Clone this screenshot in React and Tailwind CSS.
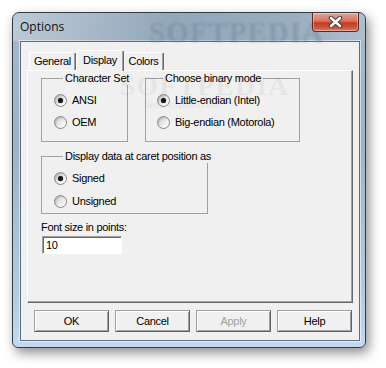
import React from 'react';

function Radio({ checked, label }) {
  return (
    <div className="flex items-center h-[18px]">
      <span className="relative w-[13px] h-[13px] rounded-full border border-[#8a8a8a] bg-[linear-gradient(135deg,#c9c9c9,#f4f4f4_70%,#ffffff)] shadow-[inset_1px_1px_1px_rgba(0,0,0,0.15)] flex items-center justify-center">
        {checked && <span className="w-[5px] h-[5px] rounded-full bg-[#151515] shadow-[0_0_1px_#555]" />}
      </span>
      <span className="ml-[5px] whitespace-nowrap">{label}</span>
    </div>
  );
}

function Group({ title, className, legendClass, children }) {
  return (
    <fieldset className={`min-w-0 border border-[#a0a0a0] ${className}`}>
      <legend className={`px-[2px] leading-[13px] whitespace-nowrap ${legendClass}`}>{title}</legend>
      {children}
    </fieldset>
  );
}

function Button({ children, disabled }) {
  return (
    <button
      className={`w-[75px] h-[22px] bg-[#f0f0f0] border border-[#a0a0a0] border-b-[#5f5f5f] border-r-[#5f5f5f] shadow-[inset_1px_1px_0_#ffffff,inset_-1px_-1px_0_#a0a0a0] ${disabled ? 'text-[#a0a0a0]' : 'text-black'}`}
    >
      {children}
    </button>
  );
}

export default function App() {
  return (
    <div className="w-[386px] h-[368px] bg-white pt-[12px] pl-[12px] font-['Liberation_Sans',Arial,sans-serif] text-[11px] tracking-[-0.3px] text-black">
      {/* Window */}
      <div className="relative w-[354px] h-[336px] rounded-t-[7px] rounded-b-[6px] border border-[#333b44] bg-[linear-gradient(180deg,#a6b8c9_0%,#9fb3c6_40%,#b4cbe1_85%,#c4d9ee_100%)] shadow-[3px_5px_12px_rgba(0,0,0,0.45)] overflow-hidden">
        {/* Title bar */}
        <div className="relative h-[28px] flex items-start justify-between pl-[7px] pr-[6px] bg-[linear-gradient(90deg,rgba(255,255,255,0.25),rgba(90,115,140,0.25)_45%,rgba(90,115,140,0.15)_80%,rgba(255,255,255,0.1))]">
          <span className="mt-[6px] font-['Open_Sans',sans-serif] text-[12px] tracking-normal leading-[16px] text-[#111]">Options</span>
          <span aria-hidden="true" className="pointer-events-none absolute left-[136px] top-[-2px] font-['Liberation_Serif',serif] font-bold text-[29px] tracking-[1px] text-[#6d889f] opacity-45 blur-[1px]">SOFTPEDIA</span>
          <div className="relative z-10 w-[47px] h-[19px] rounded-b-[4px] border border-t-0 border-[#5a2a22] bg-[linear-gradient(180deg,#e7a597_0%,#d6735f_45%,#c13b23_55%,#cf5a3f_85%,#e0846a_100%)] shadow-[inset_0_0_0_1px_rgba(255,255,255,0.35)] flex items-center justify-center">
            <svg width="15" height="12" viewBox="0 0 15 12">
              <path d="M3 2 L12 10 M12 2 L3 10" stroke="#3d3d3d" strokeWidth="4.5" strokeLinecap="round" />
              <path d="M3 2 L12 10 M12 2 L3 10" stroke="#ffffff" strokeWidth="2.6" strokeLinecap="round" />
            </svg>
          </div>
        </div>

        {/* Client area */}
        <div className="ml-[7px] w-[340px] h-[300px] border border-[#5b6d7e] bg-[#f0f0f0] shadow-[0_0_0_1px_rgba(255,255,255,0.55)]">
          {/* Tabs */}
          <div className="flex items-end h-[28px] pl-[8px] pt-[8px]">
            <div className="w-[47px] h-[18px] flex items-center justify-center rounded-t-[2px] border-l border-t border-white border-r border-r-[#696969] shadow-[inset_-1px_0_0_#a0a0a0]">
              General
            </div>
            <div className="relative z-10 w-[48px] h-[21px] -mb-[1px] pb-[2px] flex items-center justify-center rounded-t-[2px] bg-[#f0f0f0] border-l border-t border-white border-r border-r-[#696969] shadow-[inset_-1px_0_0_#a0a0a0]">
              Display
            </div>
            <div className="w-[40px] h-[18px] flex items-center justify-center rounded-t-[2px] border-t border-white border-r border-r-[#696969] shadow-[inset_-1px_0_0_#a0a0a0]">
              Colors
            </div>
          </div>

          {/* Tab panel */}
          <div className="relative ml-[6px] w-[326px] h-[233px] border border-t-white border-l-white border-r-[#696969] border-b-[#696969] shadow-[inset_-1px_-1px_0_#a0a0a0] pl-[13px] pt-[1px]">
            <div aria-hidden="true" className="pointer-events-none absolute left-[92px] top-[-6px] font-['Liberation_Serif',serif] font-bold text-[28px] tracking-[1px] text-black opacity-[0.04]">SOFTPEDIA</div>
            <div aria-hidden="true" className="pointer-events-none absolute left-[118px] top-[28px] text-[9px] text-black opacity-[0.06]">www.softpedia.com</div>

            <div className="flex gap-[17px]">
              <Group title="Character Set" className="w-[87px] pl-[12px] pt-[6px] pb-[10px]" legendClass="ml-[9px]">
                <div className="flex flex-col gap-[4px]">
                  <Radio checked label="ANSI" />
                  <Radio label="OEM" />
                </div>
              </Group>
              <Group title="Choose binary mode" className="w-[155px] pl-[11px] pt-[6px] pb-[10px]" legendClass="ml-[6px]">
                <div className="flex flex-col gap-[4px]">
                  <Radio checked label="Little-endian (Intel)" />
                  <Radio label="Big-endian (Motorola)" />
                </div>
              </Group>
            </div>

            <Group title="Display data at caret position as" className="mt-[8px] w-[167px] pl-[12px] pt-[6px] pb-[3px]" legendClass="ml-[9px]">
              <div className="flex flex-col gap-[5px]">
                <Radio checked label="Signed" />
                <Radio label="Unsigned" />
              </div>
            </Group>

            <div className="mt-[7px] leading-[13px]">Font size in points:</div>
            <div className="mt-[2px] ml-[1px] w-[80px] h-[18px] bg-white border border-[#a0a0a0] border-r-white border-b-white shadow-[inset_1px_1px_0_#696969] flex items-center pl-[3px]">
              10
            </div>
          </div>

          {/* Buttons */}
          <div className="flex gap-[6px] mt-[7px] pl-[13px]">
            <Button>OK</Button>
            <Button>Cancel</Button>
            <Button disabled>Apply</Button>
            <Button>Help</Button>
          </div>
        </div>
      </div>
    </div>
  );
}
